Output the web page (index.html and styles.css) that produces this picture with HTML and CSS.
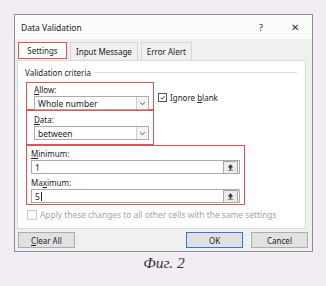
FILE: index.html
```html
<!DOCTYPE html>
<html lang="ru">
<head>
    <meta charset="UTF-8">
    <title>Data Validation</title>
    <link rel="stylesheet" href="styles.css">
</head>
<body>
    <div class="dialog">
        <div class="titlebar">
            <span class="title">Data Validation</span>
            <span class="help">?</span>
            <span class="close">&#x2715;</span>
        </div>
        <div class="tabs">
            <div class="tab active">Settings</div>
            <div class="tab">Input Message</div>
            <div class="tab">Error Alert</div>
        </div>
        <div class="panel">
            <div class="legend"><span>Validation criteria</span><i></i></div>
            <div class="row">
                <div class="mark allow">
                    <div class="label"><u>A</u>llow:</div>
                    <div class="select">
                        <span>Whole number</span>
                        <span class="drop">
                            <svg viewBox="0 0 10 10"><path d="M2.5 3.5 L5 6.5 L7.5 3.5" /></svg>
                        </span>
                    </div>
                </div>
                <label class="check on">
                    <span class="box"><svg viewBox="0 0 10 10"><path d="M2 5.2 L4.2 7.4 L8 2.8" /></svg></span>
                    <span>Ignore <u>b</u>lank</span>
                </label>
            </div>
            <div class="mark data">
                <div class="label"><u>D</u>ata:</div>
                <div class="select">
                    <span>between</span>
                    <span class="drop">
                        <svg viewBox="0 0 10 10"><path d="M2.5 3.5 L5 6.5 L7.5 3.5" /></svg>
                    </span>
                </div>
            </div>
            <div class="mark range">
                <div class="label"><u>M</u>inimum:</div>
                <div class="input">
                    <span>1</span>
                    <span class="pick"><svg viewBox="0 0 10 10"><path d="M5 1.5 L8 5 H6 V7.5 H4 V5 H2 Z M2 8.2 H8 V9 H2 Z" /></svg></span>
                </div>
                <div class="label">Ma<u>x</u>imum:</div>
                <div class="input">
                    <span class="caret">5</span>
                    <span class="pick"><svg viewBox="0 0 10 10"><path d="M5 1.5 L8 5 H6 V7.5 H4 V5 H2 Z M2 8.2 H8 V9 H2 Z" /></svg></span>
                </div>
            </div>
            <label class="check off">
                <span class="box"></span>
                <span>Apply these changes to all other cells with the same settings</span>
            </label>
        </div>
        <div class="buttons">
            <button class="btn"><u>C</u>lear All</button>
            <span class="spacer"></span>
            <button class="btn default">OK</button>
            <button class="btn">Cancel</button>
        </div>
    </div>
    <div class="caption">Фиг. 2</div>
</body>
</html>
```

FILE: styles.css
```css
body {
    margin: 0;
    padding: 14px 0 0 14px;
    background: #f2edf5;
    font-family: 'Noto Sans', 'Open Sans', sans-serif;
    font-size: 8px;
    color: #222;
}
.dialog {
    width: 297px;
    height: 236px;
    border: 1px solid #8e8e8e;
    background: #f0f0f0;
    display: flex;
    flex-direction: column;
}
.titlebar {
    height: 24px;
    display: flex;
    align-items: center;
    padding-left: 6px;
    background: #fbfbfb;
    font-size: 8.5px;
}
.title {
    flex: 1;
}
.help {
    width: 34px;
    text-align: center;
    font-size: 9px;
}
.close {
    width: 34px;
    text-align: center;
    font-size: 10px;
    color: #333;
}
.tabs {
    display: flex;
    padding: 3px 0 0 3px;
    height: 18px;
}
.tab {
    padding: 0 5px;
    line-height: 17px;
    border: 1px solid #d6d6d6;
    border-bottom: none;
    margin-right: 3px;
    font-size: 8px;
}
.tab.active {
    width: 49px;
    padding: 0;
    text-align: center;
    background: #fff;
    border: 1.5px solid #e25454;
    line-height: 16px;
    height: 17px;
    box-sizing: border-box;
}
.panel {
    margin: 0 6px 0 2px;
    height: 169px;
    background: #fff;
    border: 1px solid #d9d9d9;
    padding: 6px 8px 0 7px;
    box-sizing: border-box;
}
.legend {
    display: flex;
    align-items: center;
    gap: 3px;
    height: 11px;
    margin-bottom: 4px;
}
.legend i {
    flex: 1;
    height: 1px;
    background: #dcdcdc;
}
.row {
    display: flex;
    align-items: flex-start;
}
.mark {
    border: 1.5px solid #e25454;
    box-sizing: border-box;
    padding: 2px 4px 0 7px;
    margin-left: 1px;
}
.allow {
    width: 128px;
    height: 28px;
}
.data {
    width: 128px;
    height: 35px;
    padding-top: 4px;
}
.range {
    width: 219px;
    height: 60px;
    padding-top: 3px;
}
.label {
    height: 10px;
    line-height: 10px;
}
.select, .input {
    height: 14px;
    border: 1px solid #ababab;
    display: flex;
    align-items: center;
    padding-left: 3px;
    box-sizing: border-box;
    margin-top: 1px;
    font-size: 8.5px;
}
.select span:first-child, .input span:first-child {
    flex: 1;
}
.drop {
    width: 11px;
    height: 12px;
    border-left: 1px solid #cfcfcf;
    background: #f4f4f4;
    display: flex;
    align-items: center;
    justify-content: center;
}
.drop svg {
    width: 9px;
    height: 9px;
    fill: none;
    stroke: #555;
    stroke-width: 1;
}
.input {
    margin-bottom: 4px;
    margin-left: -3px;
}
.range .label {
    margin-left: -3px;
}
.pick {
    width: 13px;
    height: 11px;
    border: 1px solid #a8a8a8;
    background: #ececec;
    display: flex;
    align-items: center;
    justify-content: center;
    margin-right: 1px;
}
.pick svg {
    width: 9px;
    height: 9px;
    fill: #333;
}
.caret::after {
    content: '';
    display: inline-block;
    width: 1px;
    height: 9px;
    background: #222;
    vertical-align: -1px;
    margin-left: 1px;
}
.check {
    display: flex;
    align-items: center;
    gap: 3px;
}
.check.on {
    margin-left: 4px;
    margin-top: 10px;
}
.box {
    width: 9px;
    height: 9px;
    border: 1px solid #555;
    box-sizing: border-box;
    display: flex;
}
.box svg {
    width: 100%;
    height: 100%;
    fill: none;
    stroke: #333;
    stroke-width: 1.3;
}
.check.off {
    color: #a4a4a4;
    font-size: 8.4px;
    margin-top: 4px;
    margin-left: 2px;
}
.check.off .box {
    width: 10px;
    height: 10px;
    border-color: #c8c8c8;
}
.buttons {
    display: flex;
    align-items: center;
    padding: 3px 4px 0 3px;
    gap: 8px;
}
.spacer {
    flex: 1;
}
.btn {
    width: 57px;
    height: 16px;
    border: 1px solid #adadad;
    background: #e1e1e1;
    font-family: inherit;
    font-size: 8px;
    color: #222;
    padding: 0;
}
.btn.default {
    border-color: #2b7bd4;
}
.caption {
    width: 300px;
    text-align: center;
    margin-top: 2px;
    font-family: 'Liberation Serif', serif;
    font-style: italic;
    font-size: 15.5px;
    color: #333;
}
```
